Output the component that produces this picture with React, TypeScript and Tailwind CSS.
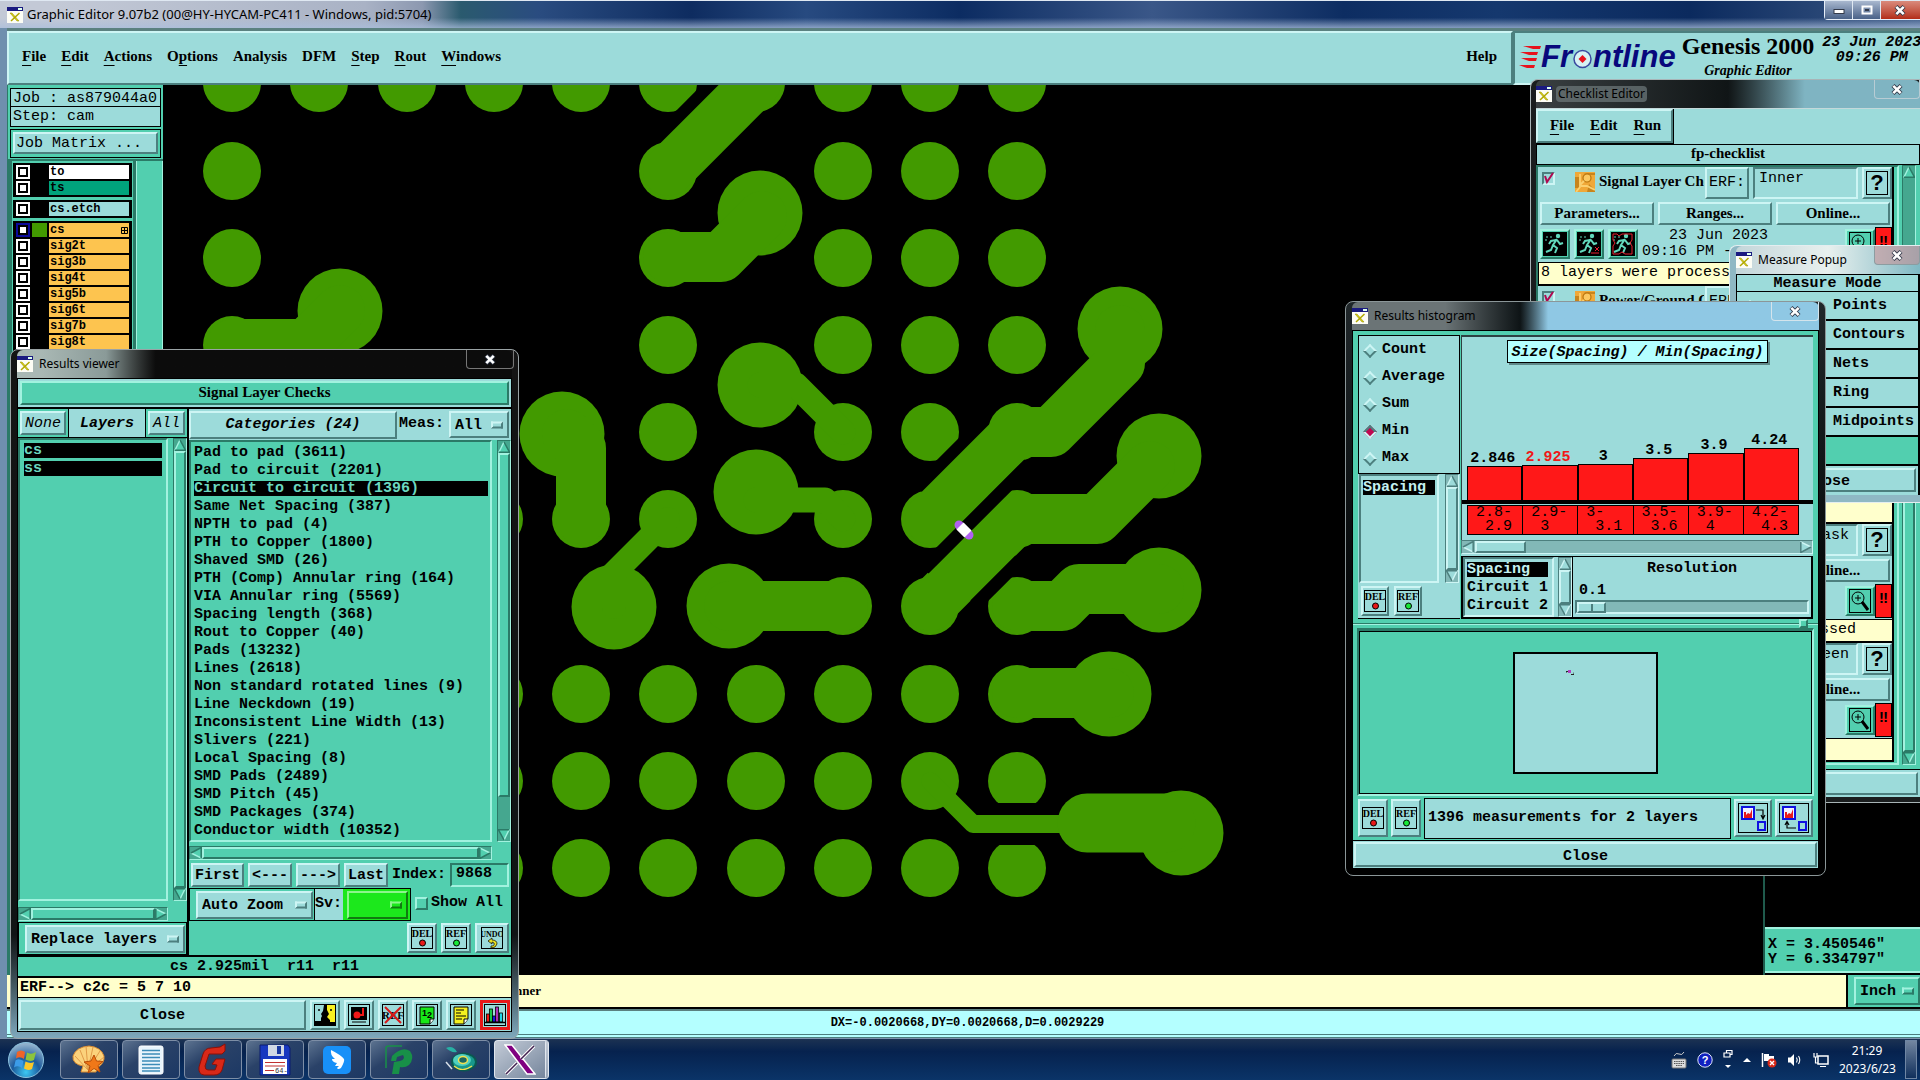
import { useState } from "react";
import type { ReactNode } from "react";
import clsx from "clsx";

const MONO = "font-['Liberation_Mono',monospace]";
const SERIF = "font-['Liberation_Serif',serif]";
const UI = "font-['Noto_Sans',sans-serif]";

const RAISED =
  "border-2 border-t-[#cdf5f4] border-l-[#cdf5f4] border-b-[#4c7f7e] border-r-[#4c7f7e] bg-[#9cdbda]";
const RAISED_TEAL =
  "border-2 border-t-[#a2f2df] border-l-[#a2f2df] border-b-[#2b7a67] border-r-[#2b7a67] bg-[#52cfaf]";
const SUNKEN =
  "border-2 border-t-[#4c7f7e] border-l-[#4c7f7e] border-b-[#cdf5f4] border-r-[#cdf5f4]";
const SUNKEN_TEAL =
  "border-2 border-t-[#2b7a67] border-l-[#2b7a67] border-b-[#a2f2df] border-r-[#a2f2df]";

const CATEGORIES = [
  "Pad to pad (3611)",
  "Pad to circuit (2201)",
  "Circuit to circuit (1396)",
  "Same Net Spacing (387)",
  "NPTH to pad (4)",
  "PTH to Copper (1800)",
  "Shaved SMD (26)",
  "PTH (Comp) Annular ring (164)",
  "VIA Annular ring (5569)",
  "Spacing length (368)",
  "Rout to Copper (40)",
  "Pads (13232)",
  "Lines (2618)",
  "Non standard rotated lines (9)",
  "Line Neckdown (19)",
  "Inconsistent Line Width (13)",
  "Slivers (221)",
  "Local Spacing (8)",
  "SMD Pads (2489)",
  "SMD Pitch (45)",
  "SMD Packages (374)",
  "Conductor width (10352)",
];

const LAYER_GROUPS = [
  [
    { name: "to", color: "bg-white" },
    { name: "ts", color: "bg-[#00a37c]" },
  ],
  [{ name: "cs.etch", color: "bg-[#9cdbda]" }],
  [
    { name: "cs", color: "bg-[#fdc44f]", active: true },
    { name: "sig2t", color: "bg-[#fdc44f]" },
    { name: "sig3b", color: "bg-[#fdc44f]" },
    { name: "sig4t", color: "bg-[#fdc44f]" },
    { name: "sig5b", color: "bg-[#fdc44f]" },
    { name: "sig6t", color: "bg-[#fdc44f]" },
    { name: "sig7b", color: "bg-[#fdc44f]" },
    { name: "sig8t", color: "bg-[#fdc44f]" },
  ],
];

const BARS = [
  { value: "2.846", height: 34, from: "2.8-", to: "2.9" },
  { value: "2.925", height: 35, from: "2.9-", to: "3", hot: true },
  { value: "3", height: 36, from: "3-", to: "3.1" },
  { value: "3.5", height: 42, from: "3.5-", to: "3.6" },
  { value: "3.9", height: 47, from: "3.9-", to: "4" },
  { value: "4.24", height: 52, from: "4.2-", to: "4.3" },
];

/* ---------- shared widgets ---------- */

function WindowIcon() {
  return (
    <svg width="16" height="16" viewBox="0 0 16 16" className="shrink-0">
      <rect width="16" height="16" fill="#fdfdf5" />
      <rect width="16" height="4" fill="#1a1a80" />
      <rect x="11" y="1" width="4" height="2" fill="#dfe" />
      <path d="M3 6 L5 6 L12 14 L10 14 Z" fill="#d8cf10" stroke="#8d8600" strokeWidth=".5" />
      <path d="M12.500 6 L4 14" stroke="#b0a800" strokeWidth="1.500" />
    </svg>
  );
}

function CloseGlyph() {
  return (
    <svg width="12" height="11" viewBox="0 0 12 11">
      <path d="M2 1.500 L10 9.500 M10 1.500 L2 9.500" stroke="#333a4a" strokeWidth="4.200" />
      <path d="M2.300 1.800 L9.700 9.200 M9.700 1.800 L2.300 9.200" stroke="#fff" strokeWidth="2.600" />
    </svg>
  );
}

interface FrameProps {
  title: string;
  className: string;
  barClass: string;
  titleClass?: string;
  closeClass: string;
  children: ReactNode;
}

function Frame({ title, className, barClass, titleClass, closeClass, children }: FrameProps) {
  return (
    <section className={clsx("absolute flex flex-col border", className)}>
      <header className={clsx("relative flex h-7 shrink-0 items-center gap-1 rounded-t-md pb-px", UI, barClass)}>
        <WindowIcon />
        <h2 className={clsx("px-0.5 text-[12px] leading-4", titleClass)}>{title}</h2>
        <button
          aria-label={`Close ${title}`}
          className={clsx("absolute top-0 flex h-[19px] items-center justify-center rounded-b border border-t-0", closeClass)}
        >
          <CloseGlyph />
        </button>
      </header>
      {children}
    </section>
  );
}

function Arrow({ dir, teal }: { dir: "up" | "down" | "left" | "right"; teal?: boolean }) {
  const rotate = { up: 0, right: 90, down: 180, left: 270 }[dir];
  return (
    <svg width="12" height="12" viewBox="0 0 12 12" className="shrink-0">
      <g transform={`rotate(${rotate} 6 6)`}>
        <path d="M6 1 L11.500 11.500 H.5 Z" fill={teal ? "#52cfaf" : "#9cdbda"} />
        <path d="M.8 11.500 L6 1" stroke={teal ? "#a2f2df" : "#cdf5f4"} strokeWidth="1.500" />
        <path d="M6 1 L11.500 11.200 H1" fill="none" stroke={teal ? "#2b7a67" : "#4c7f7e"} strokeWidth="1.500" />
      </g>
    </svg>
  );
}

interface ScrollProps {
  vertical?: boolean;
  teal?: boolean;
  before?: number;
  thumb?: number;
  after?: number;
  className?: string;
}

function ScrollBar({ vertical, teal, before = 0, thumb = 1, after = 0, className }: ScrollProps) {
  return (
    <div
      className={clsx(
        "flex shrink-0 items-stretch border",
        vertical ? "w-[14px] flex-col" : "h-[14px]",
        teal ? "border-t-[#2b7a67] border-l-[#2b7a67] border-b-[#a2f2df] border-r-[#a2f2df] bg-[#45a78f]" : "border-t-[#4c7f7e] border-l-[#4c7f7e] border-b-[#cdf5f4] border-r-[#cdf5f4] bg-[#82b8b7]",
        className
      )}
    >
      <Arrow dir={vertical ? "up" : "left"} teal={teal} />
      <div className={clsx("flex flex-1", vertical && "flex-col")}>
        <div style={{ flexGrow: before }} />
        <div className={teal ? RAISED_TEAL : RAISED} style={{ flexGrow: thumb }} />
        <div style={{ flexGrow: after }} />
      </div>
      <Arrow dir={vertical ? "down" : "right"} teal={teal} />
    </div>
  );
}

function OptionMenu({ label, text, className, barClass = RAISED }: { label: string; text: string; className?: string; barClass?: string }) {
  return (
    <div className={clsx("relative", className)}>
      <select
        aria-label={label}
        className={clsx("block h-full w-full appearance-none pt-0.5 pl-1 text-[15px] outline-none", barClass)}
      >
        <option>{text}</option>
      </select>
      <span className={clsx("pointer-events-none absolute top-1/2 right-[6px] h-[7px] w-3 -translate-y-1/2", barClass)} />
    </div>
  );
}

function IconButton({ label, className, children }: { label: string; className?: string; children: ReactNode }) {
  return (
    <button aria-label={label} className={clsx("flex shrink-0 items-center justify-center", RAISED, className)}>
      {children}
    </button>
  );
}

function TagIcon({ text, dot }: { text: string; dot?: string }) {
  return (
    <svg width="22" height="22" viewBox="0 0 22 22">
      <rect x=".5" y=".5" width="21" height="21" fill="none" stroke="#000" />
      <text x="11" y="10" textAnchor="middle" fontFamily="Liberation Serif, serif" fontSize={text.length > 3 ? 8 : 10}>
        {text}
      </text>
      {dot ? (
        <circle cx="11.500" cy="16" r="3" fill={dot} stroke="#000" />
      ) : (
        <path d="M7 14 L11 11 V13 Q16 13 16 17 Q15 21 10 21 V19 Q14 19 13 16 L11 15 V17 Z" fill="#e8e020" stroke="#000" strokeWidth=".7" />
      )}
    </svg>
  );
}

function Menu({ items, className }: { items: [string, number][]; className?: string }) {
  return (
    <nav className={clsx("flex items-center text-[15px] font-bold", SERIF, className)}>
      {items.map(([name, key]) => (
        <button key={name}>
          {key < 0 ? (
            name
          ) : (
            <>
              {name.slice(0, key)}
              <span className="underline underline-offset-4">{name[key]}</span>
              {name.slice(key + 1)}
            </>
          )}
        </button>
      ))}
    </nav>
  );
}

/* ---------- main editor window ---------- */

function Logo() {
  return (
    <div className="flex items-center">
      <svg width="22" height="26" viewBox="0 0 22 26">
        <g fill="#e8121c">
          <path d="M4 2 H22 L21 5 H14 Z" />
          <path d="M1 8 H19 L18 11 H10 Z" />
          <path d="M2 14 H18 L17 17 H10 Z" />
          <path d="M0 21 H16 L15 24 H8 Z" />
        </g>
      </svg>
      <div className="flex items-center font-['Liberation_Sans',sans-serif] text-[31px] leading-none font-bold text-[#08087c] italic">
        Fr
        <svg width="21" height="22" viewBox="0 0 21 22" className="mt-1">
          <circle cx="10.500" cy="11" r="8.500" fill="#d6f2f4" stroke="#3a4aa0" strokeWidth="1.500" />
          <path d="M10.500 7 L14.500 11 L10.500 15 L6.500 11 Z" fill="#e8121c" />
        </svg>
        ntline
      </div>
    </div>
  );
}

function MainTitle() {
  return (
    <header
      className={clsx(
        "flex h-7 shrink-0 items-center border-t border-[#dfe8f2] pl-[7px]",
        "bg-[linear-gradient(to_bottom,transparent_62%,rgba(170,190,220,0.75)),linear-gradient(to_right,#c3c9d6_3%,#a9b2c5_19%,#8c98b0_22%,#2a5a6e_24%,#2a4c80_28%,#0e2c60_36%,#274a80_42%,#0c2c62_50%,#3a5788_60%,#0d2d62_70%,#15386e_78%,#0b2a5e_88%,#3d5a86)]",
        UI
      )}
    >
      <WindowIcon />
      <h1 className="pb-0.5 pl-1 text-[13px] leading-4 text-black">Graphic Editor 9.07b2 (00@HY-HYCAM-PC411 - Windows, pid:5704)</h1>
      <div className="ml-auto flex h-[19px] self-start rounded-bl border-b border-l border-[#e6eef8]">
        <button aria-label="Minimize" className="flex w-7 items-center justify-center border-r border-[#dfe8f2] bg-linear-to-b from-[#a9b8cf] to-[#4a6288]">
          <svg width="12" height="10"><rect x="1" y="4.500" width="10" height="4" fill="#fff" stroke="#333a4a" /></svg>
        </button>
        <button aria-label="Restore" className="flex w-7 items-center justify-center border-r border-[#dfe8f2] bg-linear-to-b from-[#a9b8cf] to-[#4a6288]">
          <svg width="12" height="10"><rect x="1.500" y="1.500" width="9" height="7" fill="none" stroke="#fff" strokeWidth="2" /><rect x="4" y="4" width="4" height="2" fill="#333a4a" /></svg>
        </button>
        <button aria-label="Close" className="flex w-[39px] items-center justify-center bg-linear-to-b from-[#d98a7c] to-[#b32b16] pr-px">
          <CloseGlyph />
        </button>
      </div>
    </header>
  );
}

function HeaderBar() {
  return (
    <div className="flex h-[57px] shrink-0 border-t-[3px] border-[#5b8180] bg-[#9cdbda]">
      <div className={clsx("flex flex-1 items-center pr-[14px] pb-1 pl-[13px]", RAISED)}>
        <Menu
          className="gap-[15px]"
          items={[
            ["File", 0],
            ["Edit", 0],
            ["Actions", 0],
            ["Options", 1],
            ["Analysis", -1],
            ["DFM", -1],
            ["Step", 0],
            ["Rout", 0],
            ["Windows", 0],
          ]}
        />
        <Menu className="ml-auto" items={[["Help", -1]]} />
      </div>
      <div className={clsx("flex w-[407px] items-start gap-1.5 border-r-0 pl-1", SUNKEN)}>
        <div className="pt-2">
          <Logo />
        </div>
        <div className={clsx("shrink-0 text-center font-bold", SERIF)}>
          <p className="text-[24px] leading-[26px]">Genesis 2000</p>
          <p className="text-[14px] leading-6 italic">Graphic Editor</p>
        </div>
        <p className={clsx("ml-0.5 shrink-0 pt-0.5 text-center text-[15px] leading-[15px] font-bold whitespace-pre italic", MONO)}>
          23 Jun 2023
          <br />
          09:26 PM
        </p>
      </div>
    </div>
  );
}

function LayerRow({ name, color, active }: { name: string; color: string; active?: boolean }) {
  return (
    <button className="flex h-4 w-full items-center gap-0.5 bg-black pr-0.5 pl-[2px] text-left">
      <span className={clsx("flex h-3.5 w-3.5 items-center justify-center", active ? "bg-[#0a0a9c]" : "bg-white")}>
        <span className="h-2.5 w-2.5 border-2 border-black bg-white" />
      </span>
      <span className={clsx("h-3.5 w-[15px]", active ? "bg-[#429a00]" : "bg-black")} />
      <span className={clsx("flex h-3.5 flex-1 items-center pl-px text-[12px] leading-none font-bold", color)}>
        {name}
        {active && (
          <svg width="7" height="7" viewBox="0 0 7 7" className="mr-px ml-auto">
            <path d="M.5 .5 H6.500 V6.500 H.5 Z M3.500 0 V7 M0 3.500 H7" fill="none" stroke="#000" />
          </svg>
        )}
      </span>
    </button>
  );
}

function Sidebar() {
  return (
    <aside className="flex w-[156px] shrink-0 flex-col border-l border-[#2b7a67] bg-[#52cfaf] text-[15px]">
      <div className="flex flex-col gap-0.5 px-0.5 pt-[3px]">
        <p className="h-[19px] border border-black bg-[#9cdbda] pl-0.5 leading-[19px]">Job : as879044a0</p>
        <p className="-mt-0.5 h-5 border border-t-0 border-black bg-[#9cdbda] pl-0.5 leading-5">Step: cam</p>
        <div className="border border-black p-0.5">
          <button className={clsx("h-[22px] w-full pl-px text-left leading-none", RAISED)}>Job Matrix ...</button>
        </div>
      </div>
      <div className="mt-px flex min-h-0 flex-1 border-t-2 border-[#2b7a67]">
        <div className="flex w-32 flex-col gap-[3px] border-r-[3px] border-l-4 border-r-[#2b7a67] border-l-[#2b7a67] px-px pt-0.5">
          {LAYER_GROUPS.map((group, i) => (
            <div key={i} className="border border-black bg-black">
              {group.map((layer) => (
                <LayerRow key={layer.name} {...layer} />
              ))}
            </div>
          ))}
        </div>
        <div className="flex-1 border-r border-l border-[#a2f2df]" />
      </div>
    </aside>
  );
}

// solder pads, listed per row: [y, ...x]
const PAD_ROWS = [
  [83, 232, 319, 407, 494, 581, 668, 756, 843, 930, 1017],
  [171, 232, 668, 843, 930, 1017],
  [258, 232, 668, 843, 930, 1017],
  [345, 232, 668, 843, 930, 1017],
  [432, 668, 843, 930, 1017],
  [519, 494, 581, 668, 843, 930, 1017],
  [606, 843, 930, 1017],
  [694, 494, 581, 668, 756, 843, 930, 1017],
  [781, 494, 581, 668, 756, 843, 930, 1017],
  [868, 494, 581, 668, 756, 843, 930, 1017],
];

const VIAS = [
  [340, 311],
  [760, 213],
  [760, 385],
  [756, 492],
  [562, 434],
  [614, 607],
  [729, 606],
  [1120, 329],
  [1159, 456],
  [1159, 590],
  [1109, 694],
  [1181, 833],
];

function Board() {
  return (
    <svg className="h-full w-full">
      <g transform="translate(-163 -85)" fill="#429a00">
        {PAD_ROWS.map(([y, ...xs]) => xs.map((x) => <circle key={`${x}-${y}`} cx={x} cy={y} r="29" />))}
        {/* clearances cut into neighbouring pads */}
        <g stroke="#000" strokeWidth="13">
          <path d="M716 80 L672 124" />
          <path d="M975 431 L918 488" />
        </g>
        <rect x="985" y="803" width="65" height="42" fill="#000" />
        {VIAS.map(([x, y]) => (
          <circle key={`${x}-${y}`} cx={x} cy={y} r="42.500" />
        ))}
        <g fill="none" stroke="#429a00" strokeWidth="50" strokeLinecap="round" strokeLinejoin="round">
          <path d="M232 344 H306 L340 310" />
          <path d="M668 171 L756 83" />
          <path d="M668 257 H721 L762 216" />
          <path d="M567 434 L581 448 V519" />
          <path d="M729 606 H843" />
          <path d="M930 519 L1017 432 H1051 L1120 363 V330" />
          <path d="M930 606 L1017 519 H1097 L1150 466" />
          <path d="M1017 606 H1062 L1079 589 H1159" />
          <path d="M1017 693 H1109" />
          <path d="M843 432 L796 385 H760" strokeWidth="25" />
          <path d="M843 519 L825 500 H756" strokeWidth="25" />
          <path d="M668 519 L614 573 V607" strokeWidth="24" />
          <path d="M930 781 L973 824 H1080" strokeWidth="18" />
          <path d="M1087 823 H1166" strokeWidth="59" />
        </g>
        <g stroke="#000" strokeWidth="13">
          <path d="M1029 464 L924 569" />
          <path d="M1020 560 L975 605" />
        </g>
        <path d="M959 525 L969 535" stroke="#b060f0" strokeWidth="9" strokeLinecap="round" />
        <path d="M960 526 L968 534" stroke="#fff" strokeWidth="10" />
      </g>
    </svg>
  );
}

/* ---------- results viewer ---------- */

const ICONS = {
  faces: (
    <svg width="22" height="22" viewBox="0 0 22 22">
      <rect x=".5" y=".5" width="21" height="21" fill="#9cdbda" stroke="#000" />
      <path d="M13 1 H21 V21 H11 Z" fill="#f8f020" />
      <path d="M10 1 H13 V6 L15 10 L13 13 L16 16 V18 H21 V21 H1 V17 H7 V14 L8 12 L7 10 L9 7 Z" fill="#000" />
      <path d="M5 5 V7 M17 5 V7" stroke="#000" strokeWidth="1.500" />
    </svg>
  ),
  stamp: (
    <svg width="22" height="22" viewBox="0 0 22 22">
      <rect x=".5" y=".5" width="21" height="21" fill="#9cdbda" stroke="#000" />
      <rect x="3" y="3" width="16" height="13" fill="#000" />
      <circle cx="9" cy="11" r="3.500" fill="#f01818" />
      <path d="M9 10 H14 V4 H16 V12 H10 Z" fill="#f01818" />
      <path d="M4 18 H18" stroke="#000" />
    </svg>
  ),
  noRef: (
    <svg width="24" height="22" viewBox="0 0 24 22">
      <rect x="1.500" y=".5" width="21" height="21" fill="none" stroke="#000" />
      <text x="12" y="15" textAnchor="middle" fontFamily="Liberation Serif, serif" fontSize="11">REF</text>
      <path d="M4 3 L20 19 M20 3 L4 19" stroke="#d81818" strokeWidth="2" />
    </svg>
  ),
  page12: (
    <svg width="22" height="22" viewBox="0 0 22 22">
      <rect x=".5" y=".5" width="21" height="21" fill="none" stroke="#000" />
      <path d="M4 3 H18 V15 L14 20 H4 Z" fill="#18e818" stroke="#000" />
      <path d="M18 15 H14 V20" fill="#fff" stroke="#000" />
      <text x="6" y="12" fontFamily="Liberation Sans, sans-serif" fontWeight="bold" fontSize="9">1</text>
      <text x="11" y="14" fontFamily="Liberation Sans, sans-serif" fontWeight="bold" fontSize="9">2</text>
    </svg>
  ),
  note: (
    <svg width="22" height="22" viewBox="0 0 22 22">
      <rect x=".5" y=".5" width="21" height="21" fill="none" stroke="#000" />
      <path d="M4 3 H18 V15 L14 20 H4 Z" fill="#f4f020" stroke="#000" />
      <path d="M18 15 H14 V20" fill="#fff" stroke="#000" />
      <path d="M6 6 H14 M6 9 H11 M6 12 H16 M6 15 H12" stroke="#000" />
    </svg>
  ),
  bars: (
    <svg width="22" height="22" viewBox="0 0 22 22">
      <rect x=".5" y=".5" width="21" height="21" fill="#9cdbda" stroke="#000" />
      <g stroke="#000" strokeWidth=".8">
        <rect x="2.500" y="10" width="3" height="8" fill="#f01818" />
        <rect x="5.500" y="5" width="3" height="13" fill="#18c848" />
        <rect x="8.500" y="12" width="3" height="6" fill="#1818e0" />
        <rect x="11.500" y="3" width="3" height="15" fill="#b030b8" />
        <rect x="15.500" y="9" width="3" height="9" fill="#20d8e8" />
        <path d="M1 18.500 H21" strokeWidth="1.500" />
      </g>
    </svg>
  ),
};

function ResultsViewer() {
  const [selected, setSelected] = useState(2);

  return (
    <Frame
      title="Results viewer"
      className="top-[349px] left-[10px] h-[690px] w-[509px] rounded-lg border-[#9aa3a5] bg-linear-to-b from-[#141414] via-[#101415] via-85% to-[#7fa9bd] px-1.5 pb-1.5"
      barClass="bg-linear-to-r from-[#a9b8b4] from-5% via-[#8a9a98] via-18% to-[#0c0c0c] to-28%"
      titleClass="text-black"
      closeClass="right-[-2px] w-12 border-[#777]"
    >
      <div className={clsx("flex min-h-0 flex-1 flex-col bg-black p-px text-[15px] font-bold", MONO)}>
        <div className="h-7 shrink-0 border border-[#9cdbda] bg-[#9cdbda] p-px">
          <h3 className={clsx("h-full text-center text-[15px] leading-[19px]", SERIF, RAISED_TEAL)}>Signal Layer Checks</h3>
        </div>

        <div className="mt-0.5 flex min-h-0 flex-1 gap-0.5">
          <div className="flex w-[169px] flex-col">
            <div className="flex h-7 shrink-0 gap-px text-center italic">
              <div className="w-[50px] bg-[#52cfaf] p-0.5">
                <button className={clsx("h-full w-full leading-none font-normal italic", RAISED)}>None</button>
              </div>
              <span className="flex-1 bg-[#9cdbda] leading-[29px]">Layers</span>
              <div className="w-[41px] bg-[#52cfaf] p-0.5">
                <button className={clsx("h-full w-full leading-none font-normal italic", RAISED)}>All</button>
              </div>
            </div>
            <div className="mt-px flex min-h-0 flex-1 flex-col gap-1.5 bg-[#52cfaf] pb-px">
              <div className="flex min-h-0 flex-1 justify-between">
                <ul className={clsx("w-[150px] px-1 pt-[3px]", SUNKEN_TEAL)}>
                  {["cs", "ss"].map((layer) => (
                    <li key={layer} className="mb-[3px] h-[15px] bg-black leading-[15px] text-[#6cd8c0]">
                      {layer}
                    </li>
                  ))}
                </ul>
                <ScrollBar vertical teal />
              </div>
              <ScrollBar teal className="w-[150px]" />
            </div>
            <div className="flex h-[33px] shrink-0 items-center border border-black bg-[#52cfaf] pr-px pl-1.5">
              <OptionMenu label="Replace layers mode" text="Replace layers" className="h-7 flex-1" />
            </div>
          </div>

          <div className="flex min-w-0 flex-1 flex-col bg-[#52cfaf]">
            <div className="flex h-[31px] shrink-0 items-center gap-0.5 bg-[#9cdbda]">
              <button className={clsx("h-[28px] w-[208px] leading-none italic", RAISED)}>Categories (24)</button>
              <span>Meas:</span>
              <OptionMenu label="Measurements" text="All" className="mr-0.5 ml-auto h-[27px] w-[60px]" />
            </div>
            <div className="flex min-h-0 flex-1 justify-between pb-1">
              <ul className={clsx("w-[303px] overflow-hidden pt-[3px] pr-0.5 pl-[3px]", SUNKEN_TEAL)}>
                {CATEGORIES.map((category, i) => (
                  <li key={category} className="mb-[3px] h-[15px]">
                    <button
                      onClick={() => setSelected(i)}
                      className={clsx(
                        "block h-[15px] w-full text-left leading-[15px]",
                        i === selected && "bg-black text-[#6cd8c0]"
                      )}
                    >
                      {category}
                    </button>
                  </li>
                ))}
              </ul>
              <ScrollBar vertical teal thumb={345} after={32} />
            </div>
            <ScrollBar teal className="w-[303px]" />
            <div className="mt-[3px] flex h-6 shrink-0 items-center gap-1 px-0.5">
              <button className={clsx("h-full w-[53px] shrink-0 leading-none", RAISED)}>First</button>
              <button className={clsx("h-full w-11 shrink-0 leading-none", RAISED)}>&lt;---</button>
              <button className={clsx("h-full w-11 shrink-0 leading-none", RAISED)}>---&gt;</button>
              <button className={clsx("h-full w-11 shrink-0 leading-none", RAISED)}>Last</button>
              <label htmlFor="index">Index:</label>
              <input id="index" defaultValue="9868" className={clsx("h-full min-w-0 flex-1 pb-1 pl-1 outline-none", SUNKEN_TEAL)} />
            </div>
            <div className="mt-px flex h-[33px] shrink-0 items-center">
              <div className="flex h-full w-[126px] items-center border border-black px-px pl-[6px]">
                <OptionMenu label="Zoom mode" text="Auto Zoom" className="h-7 flex-1" />
              </div>
              <div className="flex h-full w-24 items-center border border-l-0 border-black bg-[#1ce81c] pr-0.5">
                <span className="flex h-full w-7 items-center bg-[#9cdbda]">Sv:</span>
                <OptionMenu
                  label="Severity"
                  text=""
                  className="ml-1 h-7 flex-1"
                  barClass="border-2 border-t-[#8df58d] border-l-[#8df58d] border-b-[#117a11] border-r-[#117a11] bg-[#1ce81c]"
                />
              </div>
              <label className="ml-1 flex items-center gap-[3px] pb-0.5">
                <input type="checkbox" className={clsx("h-[13px] w-[13px] appearance-none", RAISED_TEAL)} />
                Show All
              </label>
            </div>
            <div className="flex h-[34px] shrink-0 items-center justify-end gap-1 pr-0.5">
              <IconButton label="Delete" className="h-[30px] w-[30px]">
                <TagIcon text="DEL" dot="#e81818" />
              </IconButton>
              <IconButton label="Reference" className="h-[30px] w-[30px]">
                <TagIcon text="REF" dot="#18e838" />
              </IconButton>
              <IconButton label="Undo" className="h-[30px] w-[34px]">
                <TagIcon text="UNDO" />
              </IconButton>
            </div>
          </div>
        </div>

        <p className="mt-0.5 h-[19px] shrink-0 bg-[#52cfaf] text-center leading-[20px] whitespace-pre">cs 2.925mil  r11  r11</p>
        <p className="mt-0.5 h-[19px] shrink-0 bg-[#ffffcc] pl-0.5 leading-[20px]">ERF--&gt; c2c = 5 7 10</p>
        <div className="mt-px flex h-[33px] shrink-0 items-center gap-1 bg-[#9cdbda] px-px">
          <button className={clsx("h-[30px] flex-1 pt-0.5 leading-none", RAISED)}>Close</button>
          <IconButton label="Compare" className="h-[30px] w-[30px]">{ICONS.faces}</IconButton>
          <IconButton label="Snapshot" className="h-[30px] w-[30px]">{ICONS.stamp}</IconButton>
          <IconButton label="Clear reference" className="h-[30px] w-[30px]">{ICONS.noRef}</IconButton>
          <IconButton label="Numbers" className="h-[30px] w-[30px]">{ICONS.page12}</IconButton>
          <IconButton label="Notes" className="h-[30px] w-[30px]">{ICONS.note}</IconButton>
          <button aria-label="Histogram" className="flex h-[30px] w-[30px] items-center justify-center border-[3px] border-[#e81818]">
            {ICONS.bars}
          </button>
        </div>
      </div>
    </Frame>
  );
}

/* ---------- checklist editor ---------- */

function Runner({ variant }: { variant: number }) {
  return (
    <svg width="24" height="24" viewBox="0 0 24 24">
      <rect width="24" height="24" fill="#000" />
      <circle cx="15" cy="4" r="2.200" fill="#62d8bc" />
      <path d="M14 7 L10 13 L14 16 L12 21 M10 13 L8 18 L3 20 M13 8 L8 9 L6 12 M14 8 L17 12 L20 11" fill="none" stroke="#62d8bc" strokeWidth="2" />
      <path d="M3 5 H5 M7 5 H9 M2 8 H4" stroke="#62d8bc" />
      {variant === 1 && <path d="M18 15 L22 19 M22 15 L18 19 M14 21 H22" stroke="#e82030" />}
      {variant === 2 && <path d="M2 2 H6 L8 4 L11 2 H21 V8 L19 11 L21 14 V22 H14 L11 20 L8 22 H2 V14 L4 11 L2 8 Z" fill="none" stroke="#e82030" />}
    </svg>
  );
}

function ChecklistCard({ id, name, erf, date, time, message }: { id: string; name: string; erf: string; date?: string; time?: string; message?: string }) {
  return (
    <article className="flex h-[119px] shrink-0 flex-col border-r-2 border-b-2 border-black bg-[#9cdbda]">
      <div className="flex h-[33px] shrink-0 items-start">
        <span className="relative mt-[5px] ml-1 h-[13px] w-[13px] shrink-0">
          <input id={id} type="checkbox" defaultChecked className={clsx("block h-[13px] w-[13px] appearance-none", SUNKEN)} />
          <svg viewBox="0 0 13 13" className="pointer-events-none absolute inset-0">
            <path d="M3 4 L5 10 L11 1" fill="none" stroke="#b00850" strokeWidth="2" />
          </svg>
        </span>
        <svg width="20" height="20" viewBox="0 0 20 20" className="mt-[5px] ml-5 shrink-0">
          <rect width="20" height="20" fill="#f0a838" />
          <path d="M0 5 H4 V16 H0 Z M14 12 L20 18 V20 H12 Z M8 1 H20 V3 H16 Z" fill="#c8841c" />
          <circle cx="12" cy="6" r="4" fill="#fbc860" stroke="#b8740c" strokeWidth="1.200" />
          <path d="M5 2 V15 L1 20 M6 14 H12 L20 18 M9 9 L5 13" stroke="#fbd070" strokeWidth="1.800" fill="none" />
        </svg>
        <label htmlFor={id} className={clsx("mt-1 ml-1 w-[105px] shrink-0 overflow-hidden text-[15px] leading-5 font-bold whitespace-nowrap", SERIF)}>
          {name}
        </label>
        <span className={clsx("ml-px flex h-8 w-11 shrink-0 items-center justify-center", RAISED)}>ERF:</span>
        <input aria-label={`${name} ERF`} defaultValue={erf} className={clsx("ml-1 h-8 min-w-0 flex-1 pb-2.5 pl-1 outline-none", SUNKEN)} />
        <button className={clsx("ml-1 h-8 w-[30px] p-0.5", RAISED)} aria-label={`Help on ${name}`}>
          <span className="flex h-full items-center justify-center border border-black font-['Liberation_Sans',sans-serif] text-[22px] leading-none font-bold">?</span>
        </button>
      </div>
      <div className={clsx("mt-0.5 flex h-[23px] shrink-0 gap-1 px-0.5 text-[15px] font-bold", SERIF)}>
        {["Parameters...", "Ranges...", "Online..."].map((text) => (
          <button key={text} className={clsx("flex-1 leading-none", RAISED)}>
            {text}
          </button>
        ))}
      </div>
      <div className="flex h-[37px] shrink-0 items-center gap-1 pl-0.5">
        {[0, 1, 2].map((v) => (
          <button key={v} aria-label={`Run ${v + 1}`} className={clsx("flex h-[30px] w-[30px] shrink-0 items-center justify-center", RAISED_TEAL)}>
            <Runner variant={v} />
          </button>
        ))}
        <p className="flex-1 leading-4 whitespace-pre">
          {"   "}
          {date}
          <br />
          {time}
        </p>
        <button aria-label="Zoom" className={clsx("flex h-[30px] w-[30px] shrink-0 items-center justify-center", RAISED_TEAL)}>
          <svg width="22" height="24" viewBox="0 0 22 24">
            <rect x=".5" y=".5" width="21" height="23" fill="none" stroke="#000" />
            <circle cx="9" cy="9" r="6" fill="none" stroke="#000" />
            <path d="M6 9 H12 M9 6 V12" stroke="#000" />
            <path d="M13 13 L19 21" stroke="#000" strokeWidth="3" />
          </svg>
        </button>
        <span className="-ml-1 flex h-[34px] w-[17px] shrink-0 items-center justify-center border border-black bg-[#ff1818] font-bold">‼</span>
      </div>
      <p className="min-h-0 flex-1 border-t border-l border-black bg-[#ffffcc] pl-0.5 leading-[19px]">{message}</p>
    </article>
  );
}

function ChecklistEditor() {
  return (
    <Frame
      title="Checklist Editor"
      className="top-[79px] right-0 h-[724px] w-[390px] rounded-tl-lg rounded-bl-lg border-r-0 border-[#a8b4b6] bg-[#1a1d1e] pb-[5px] pl-[5px]"
      barClass="bg-linear-to-r from-[#3a4042] via-[#101516] via-50% to-[#7fb4c2] to-70%"
      titleClass="rounded bg-[#6f7a7c]/70 text-black"
      closeClass="right-0 w-[46px] border-[#b8ccd4]"
    >
      <div className={clsx("flex min-h-0 flex-1 flex-col border-t border-[#c4d8da] bg-[#9cdbda] text-[15px]", MONO)}>
        <div className="flex h-[35px] shrink-0">
          <div className={clsx("flex w-[138px] items-center justify-center border-r border-b border-black")}>
            <Menu
              className={clsx("h-full w-full justify-center gap-[16px] pb-0.5 pl-0.5", RAISED)}
              items={[
                ["File", 0],
                ["Edit", 0],
                ["Run", 0],
              ]}
            />
          </div>
        </div>
        <h3 className={clsx("h-[21px] shrink-0 border border-black text-center text-[15px] leading-[17px] font-bold", SERIF)}>fp-checklist</h3>
        <div className="flex min-h-0 flex-1 gap-[3px] bg-[#52cfaf] pr-1 pb-1">
          <div className={clsx("flex min-w-0 flex-1 flex-col overflow-hidden pr-[3px]", SUNKEN_TEAL)}>
            <ChecklistCard id="c1" name="Signal Layer Checks" erf="Inner" date="23 Jun 2023" time="09:16 PM - 1" message="8 layers were processed" />
            <ChecklistCard id="c2" name="Power/Ground Checks" erf="Inner" />
            <ChecklistCard id="c3" name="Drill Checks" erf="Drill" />
            <ChecklistCard id="c4" name="Solder Mask Checks" erf="Outer mask" message="The outer layers were all processed" />
            <ChecklistCard id="c5" name="Silk Screen Checks" erf="Silkscreen" />
          </div>
          <ScrollBar vertical teal before={125} thumb={445} />
        </div>
        <div className="h-7 shrink-0 border-t border-black p-0.5">
          <button className={clsx("h-full w-full leading-none font-bold", RAISED)}>Close</button>
        </div>
      </div>
    </Frame>
  );
}

/* ---------- measure popup ---------- */

function MeasurePopup() {
  return (
    <Frame
      title="Measure Popup"
      className="top-[245px] right-0 h-[258px] w-[191px] rounded-tl-lg rounded-bl-lg border-r-0 border-[#e4eef0] bg-[#8fb8c4] pb-[7px] pl-1.5"
      barClass="bg-linear-to-r from-[#c4d6da] via-[#e8f0ee] via-50% to-[#7fb9c4]"
      titleClass="text-black"
      closeClass="right-0 w-[46px] border-[#8c9ca0] bg-[#d0888c]/50"
    >
      <div className={clsx("flex min-h-0 flex-1 flex-col border-t border-r-2 border-l border-black bg-[#52cfaf] text-[15px] font-bold", MONO)}>
        <h3 className="h-[17px] shrink-0 border-b border-black bg-[#9cdbda] text-center leading-[17px]">Measure Mode</h3>
        {["Points", "Contours", "Nets", "Ring", "Midpoints"].map((mode) => (
          <label key={mode} className="flex h-[29px] shrink-0 items-center border-b-2 border-black bg-[#9cdbda] pt-0.5">
            <input type="radio" name="measure" className={clsx("ml-2 h-2.5 w-2.5 rotate-45 appearance-none", RAISED)} />
            <span className="pl-[78px]">{mode}</span>
          </label>
        ))}
        <div className="mt-auto border-t-2 border-black bg-[#9cdbda] p-0.5">
          <button className={clsx("h-6 w-full pt-0.5 leading-none", RAISED)}>Close</button>
        </div>
      </div>
    </Frame>
  );
}

/* ---------- results histogram ---------- */

function MoveIcon({ up }: { up?: boolean }) {
  return (
    <svg width="30" height="30" viewBox="0 0 30 30">
      <rect x=".5" y=".5" width="29" height="29" fill="none" stroke="#000" />
      <rect x="4" y="4" width="12" height="12" fill="#f0f0ff" stroke="#1010e0" strokeWidth="2" />
      <path d="M6 15 V9 L8 9 V12 L10 10 L12 11 L14 6 V15 Z" fill="#e81818" />
      <rect x="20" y="19" width="7" height="8" fill="none" stroke="#1010e0" strokeWidth="2" />
      {up ? (
        <path d="M17 25 H8 V19 M6 22 L8 18.500 L10 22" fill="none" stroke="#000" strokeWidth="1.200" />
      ) : (
        <path d="M18 7 H25 V16 M23 12 L25 16 L27 12" fill="none" stroke="#000" strokeWidth="1.200" />
      )}
    </svg>
  );
}

function ResultsHistogram() {
  const [stat, setStat] = useState("Min");

  return (
    <Frame
      title="Results histogram"
      className="top-[301px] right-[94px] h-[575px] w-[481px] rounded-lg border-[#8b9698] bg-linear-to-b from-[#20272a] to-black px-1.5 pb-1.5"
      barClass="bg-linear-to-r from-[#6b7476] from-20% via-[#0e1416] via-36% to-[#8fc8e4] to-42%"
      titleClass="text-black"
      closeClass="right-0 w-12 border-[#d4e4ec]"
    >
      <div className={clsx("flex min-h-0 flex-1 flex-col border border-black bg-[#52cfaf] text-[15px] font-bold", MONO)}>
        <div className="flex h-[288px] shrink-0 gap-px px-[5px] pt-1">
          <div className="flex w-[102px] shrink-0 flex-col border-b border-black bg-[#9cdbda]">
            <fieldset className="flex h-[139px] flex-col justify-center border border-black pt-px">
              {["Count", "Average", "Sum", "Min", "Max"].map((name) => (
                <label key={name} className="flex h-[27px] items-center gap-[7px] pl-1.5">
                  <input
                    type="radio"
                    name="stat"
                    checked={stat === name}
                    onChange={() => setStat(name)}
                    className="h-2.5 w-2.5 rotate-45 appearance-none border-2 border-t-[#cdf5f4] border-r-[#4c7f7e] border-b-[#4c7f7e] border-l-[#cdf5f4] checked:border-t-[#4c7f7e] checked:border-r-[#cdf5f4] checked:border-b-[#cdf5f4] checked:border-l-[#4c7f7e] checked:bg-[#c00850]"
                  />
                  {name}
                </label>
              ))}
            </fieldset>
            <div className="flex min-h-0 flex-1 justify-between px-px">
              <div className={clsx("w-20 px-0.5 pt-1", SUNKEN)}>
                <p className="h-[15px] w-[72px] bg-black leading-[15px] text-[#c4f0f0]">Spacing</p>
              </div>
              <ScrollBar vertical />
            </div>
            <div className="flex h-[35px] shrink-0 items-center gap-[5px] pl-[3px]">
              <IconButton label="Delete" className="h-[30px] w-[28px]">
                <TagIcon text="DEL" dot="#e81818" />
              </IconButton>
              <IconButton label="Reference" className="h-[30px] w-[28px]">
                <TagIcon text="REF" dot="#18e838" />
              </IconButton>
            </div>
          </div>

          <div className="flex min-w-0 flex-1 flex-col bg-[#9cdbda]">
            <div className="flex min-h-0 flex-1 flex-col border-t-2 border-l border-black/70">
              <p className="mt-[3px] self-center border border-black bg-[#b4ffff] px-[3px] pt-[3px] leading-[18px] italic shadow-[2px_2px_0_#5f8a8a]">
                Size(Spacing) / Min(Spacing)
              </p>
              <div className="flex flex-1 items-end pr-[14px] pl-[5px]">
                {BARS.map((bar) => (
                  <div key={bar.value} className="min-w-0 flex-1 text-center">
                    <p className={clsx("pr-1 leading-[15px]", bar.hot && "text-[#f01818]")}>{bar.value}</p>
                    <div className="border-t border-r border-l border-black bg-[#ff1818]" style={{ height: bar.height }} />
                  </div>
                ))}
              </div>
              <div className="h-1 bg-black" />
              <div className="mt-px mb-[5px] flex h-[30px] pr-[14px] pl-[5px]">
                {BARS.map((bar) => (
                  <p
                    key={bar.from}
                    className="min-w-0 flex-1 border border-r-0 border-black bg-[#ff1818] pl-2 leading-[14px] font-normal whitespace-pre last:border-r"
                  >
                    {bar.from}
                    <br /> {bar.to}
                  </p>
                ))}
              </div>
            </div>
            <ScrollBar before={1} thumb={47} after={275} />
            <div className="mt-0.5 flex h-[63px] shrink-0 border-2 border-t border-black">
              <ul className={clsx("w-[91px] pt-[3px] pl-0.5", SUNKEN)}>
                {["Spacing", "Circuit 1", "Circuit 2"].map((item, i) => (
                  <li key={item} className={clsx("mb-[3px] h-[15px] w-[81px] leading-[15px]", i === 0 && "bg-black text-[#c4f0f0]")}>
                    {item}
                  </li>
                ))}
              </ul>
              <ScrollBar vertical className="ml-1" />
              <div className="flex flex-1 flex-col border-l border-black px-0.5">
                <label htmlFor="resolution" className="pt-px text-center leading-[22px]">
                  Resolution
                </label>
                <output htmlFor="resolution" className="pt-px pl-1 leading-[19px]">
                  0.1
                </output>
                <input
                  id="resolution"
                  type="range"
                  min="0"
                  max="10"
                  defaultValue="0"
                  className={clsx(
                    "h-[14px] w-full appearance-none bg-[#82b8b7]",
                    SUNKEN,
                    "[&::-webkit-slider-thumb]:h-[11px] [&::-webkit-slider-thumb]:w-[29px] [&::-webkit-slider-thumb]:appearance-none [&::-webkit-slider-thumb]:border-2 [&::-webkit-slider-thumb]:border-t-[#cdf5f4] [&::-webkit-slider-thumb]:border-l-[#cdf5f4] [&::-webkit-slider-thumb]:border-r-[#4c7f7e] [&::-webkit-slider-thumb]:border-b-[#4c7f7e] [&::-webkit-slider-thumb]:bg-[linear-gradient(to_right,#9cdbda_48%,#4c7f7e_48%,#4c7f7e_54%,#9cdbda_54%)]"
                  )}
                />
              </div>
            </div>
          </div>
        </div>

        <div className="flex h-[9px] shrink-0 items-center">
          <div className="h-0.5 flex-1 border-t border-b border-t-[#2b7a67] border-b-[#a2f2df]" />
          <div className={clsx("h-[9px] w-[9px]", RAISED_TEAL)} />
          <div className="h-0.5 w-2.5 border-t border-b border-t-[#2b7a67] border-b-[#a2f2df]" />
        </div>

        <div className={clsx("mx-1 flex min-h-0 flex-1 border-t-[3px]", SUNKEN_TEAL)}>
          <div className="flex flex-1 items-center justify-center border border-black">
            <div className="h-[122px] w-[145px] border-2 border-black bg-[#9cdbda] pt-4 pl-[51px]">
              <svg width="8" height="5" viewBox="0 0 8 5">
                <path d="M0 3 V1.500 H2 M5 4.500 H8 V2.500" fill="none" stroke="#222" />
                <rect x="2" y="0" width="3" height="3" fill="#b040c0" />
              </svg>
            </div>
          </div>
        </div>

        <div className="flex h-[44px] shrink-0 items-center gap-[3px] px-[5px]">
          <IconButton label="Delete" className="h-[38px] w-[30px]">
            <TagIcon text="DEL" dot="#e81818" />
          </IconButton>
          <IconButton label="Reference" className="h-[38px] w-[30px]">
            <TagIcon text="REF" dot="#18e838" />
          </IconButton>
          <p className="flex h-[41px] flex-1 items-center border border-black bg-[#9cdbda] pt-px pl-[3px]">1396 measurements for 2 layers</p>
          <IconButton label="Send down" className="h-[38px] w-[38px]">
            <MoveIcon />
          </IconButton>
          <IconButton label="Send up" className="h-[38px] w-[38px]">
            <MoveIcon up />
          </IconButton>
        </div>
        <div className="h-7 shrink-0 border-t border-black bg-[#9cdbda] p-px">
          <button className={clsx("h-[25px] w-full pt-[3px] leading-none", RAISED)}>Close</button>
        </div>
      </div>
    </Frame>
  );
}

/* ---------- taskbar ---------- */

const TASKS = [
  {
    name: "Shell",
    icon: (
      <svg width="34" height="32" viewBox="0 0 34 32">
        <path d="M9 28 L11 22 Q0 20 1 12 Q4 3 17 2 Q29 3 32 12 Q33 19 25 24 L24 28 Z" fill="#fbd27c" stroke="#d88a30" />
        <path d="M16 26 L3 12 M16 26 L8 6 M16 26 L14 2 M16 26 L21 3 M16 26 L28 7 M16 26 L32 13" stroke="#e09a48" fill="none" />
        <path d="M22 11 L24.500 17 L31 17.500 L26 21.500 L28 28 L22 24.500 L16 29 L18 22 L12 18 L19 17 Z" fill="#f07818" stroke="#b84c08" />
      </svg>
    ),
  },
  {
    name: "Notepad",
    icon: (
      <svg width="26" height="30" viewBox="0 0 26 30">
        <rect x="1" y="1" width="24" height="28" rx="2" fill="#e8f4fc" stroke="#fff" />
        <path d="M4 5.500 H22 M4 9 H22 M4 12.500 H22 M4 16 H22 M4 19.500 H22 M4 23 H22 M4 26 H22" stroke="#3c8cb8" strokeWidth="1.600" />
      </svg>
    ),
  },
  {
    name: "Genflex",
    icon: (
      <svg width="30" height="34" viewBox="0 0 30 34">
        <path d="M27 1 V8 L24 11 H11 L7 23 Q7 27 10 27 H17 L19 22 L14 21 L18 16 H27 L24 27 Q22 32 16 32 H6 Q0 31 1 24 L5 11 Q7 5 13 5 L22 4 Z" fill="#d82818" stroke="#8c1008" />
      </svg>
    ),
  },
  {
    name: "Disk",
    icon: (
      <svg width="32" height="32" viewBox="0 0 32 32">
        <path d="M1 1 H29 L31 4 V31 H1 Z" fill="#1838c0" stroke="#0a1c70" />
        <rect x="9" y="1" width="16" height="11" fill="#d0d8e4" />
        <rect x="18" y="2" width="4" height="8" fill="#1838a0" />
        <rect x="4" y="15" width="24" height="15" fill="#fff" />
        <path d="M6 18.500 H26 M6 22 H26 M6 26.500 H15" stroke="#c03030" />
        <text x="16" y="29" fontSize="7" fontFamily="Liberation Mono, monospace" fill="#333">64-</text>
      </svg>
    ),
  },
  {
    name: "Dingtalk",
    icon: (
      <svg width="28" height="28" viewBox="0 0 28 28">
        <rect width="28" height="28" rx="5" fill="#1890f8" />
        <path d="M8 4 Q18 9 21 13 Q22 15 18 22 Q15 24 14 22 L16 20 L12 20 L14 17 Q9 16 9 13 L12 13 Q7 9 8 4 Z" fill="#fff" />
      </svg>
    ),
  },
  {
    name: "Planner",
    icon: (
      <svg width="34" height="32" viewBox="0 0 34 32">
        <path d="M4 24 V4 Q4 2 7 2 H20" fill="none" stroke="#189048" strokeWidth="1.500" />
        <path d="M10 12 Q20 2 28 7 Q33 14 27 21 Q23 24 18 23 L17 30 H10 L12 18 L18 17 Q24 15 21 11 L15 13 L14 17 H9 Z" fill="#189048" />
      </svg>
    ),
  },
  {
    name: "Reel",
    icon: (
      <svg width="34" height="30" viewBox="0 0 34 30">
        <ellipse cx="20" cy="17" rx="12" ry="8.500" fill="#18988c" stroke="#0a5850" strokeWidth="2" />
        <ellipse cx="18" cy="15" rx="9" ry="6" fill="#50d0c0" />
        <ellipse cx="19" cy="15" rx="4.500" ry="3.500" fill="#1c6860" stroke="#f0e050" strokeWidth="1.500" />
        <path d="M10 21 Q18 28 28 21" fill="none" stroke="#f0e050" strokeWidth="1.200" />
        <path d="M2 3 Q9 0 13 7 Q7 8 2 3 Z" fill="#28b0a4" />
        <path d="M2 17 L8 24" stroke="#d8e0e8" strokeWidth="1.500" />
      </svg>
    ),
  },
];

function Taskbar() {
  return (
    <footer
      className={clsx(
        "flex h-[42px] shrink-0 items-center gap-1 border-t border-[#7d93ad] bg-linear-to-b from-[#1c3252] via-[#06224e] via-30% to-[#0b3468] pr-[3px] text-white",
        UI
      )}
    >
      <button aria-label="Start" className="flex w-14 shrink-0 justify-center pr-1">
        <svg width="38" height="38" viewBox="0 0 38 38">
          <defs>
            <radialGradient id="orb" cx=".5" cy=".85" r=".8">
              <stop offset="0" stopColor="#3cc8f4" />
              <stop offset=".5" stopColor="#1c5a9c" />
              <stop offset="1" stopColor="#8fb0cc" />
            </radialGradient>
          </defs>
          <circle cx="19" cy="19" r="17.500" fill="url(#orb)" stroke="#8cc4e0" />
          <path d="M10 11 Q14 8 18 11 L17 18 Q13 15 9 17.500 Z" fill="#f06428" />
          <path d="M20 11.500 Q24 14 29 11 L27 19 Q23 21 18.500 18.500 Z" fill="#8cc43c" />
          <path d="M8.500 19.500 Q12 17 16.500 20 L15 27 Q11 24 7 26.500 Z" fill="#3c9ce8" />
          <path d="M18.500 20.500 Q23 23 27 21 L25 28 Q21 30 17 27.500 Z" fill="#fcc828" />
        </svg>
      </button>
      {TASKS.map((task) => (
        <button
          key={task.name}
          aria-label={task.name}
          className="flex h-[39px] w-[58px] shrink-0 items-center justify-center rounded-sm border border-[#7d8ea6] bg-linear-to-br from-[#5d7390] via-[#2a4268] via-40% to-[#1c3864]"
        >
          {task.icon}
        </button>
      ))}
      <button
        aria-label="X server"
        className="flex h-[39px] w-[55px] shrink-0 items-center justify-center rounded-sm border border-r-4 border-double border-[#e0e6ee] bg-linear-to-br from-[#c4ccd8] to-[#76869c]"
      >
        <svg width="32" height="32" viewBox="0 0 32 32">
          <path d="M1 1 H8 L31 30 H23 Z" fill="#800080" stroke="#fff" strokeWidth="1.500" />
          <path d="M30 2 L17 15 M13 19 L2 30" stroke="#fff" strokeWidth="3.500" />
          <path d="M30 2 L17 15 M13 19 L2 30" stroke="#402050" strokeWidth="1.500" />
        </svg>
      </button>

      <div className="ml-auto flex h-full items-center gap-2.5">
        <svg width="16" height="18" viewBox="0 0 16 18">
          <path d="M3 5 Q5 1 8 3 T13 1" fill="none" stroke="#ccc" />
          <rect x="1" y="8" width="14" height="9" rx="1" fill="#ddd" stroke="#777" />
          <path d="M3 10.500 H13 M3 12.500 H13 M5 14.500 H11" stroke="#555" strokeDasharray="1.500 .7" />
        </svg>
        <svg width="16" height="16" viewBox="0 0 16 16">
          <circle cx="8" cy="8" r="7.200" fill="#1020c0" stroke="#dfe4f8" />
          <text x="8" y="12" textAnchor="middle" fontSize="11" fontWeight="bold" fill="#fff" fontFamily="Liberation Sans, sans-serif">?</text>
        </svg>
        <svg width="10" height="24" viewBox="0 0 10 24">
          <path d="M3.500 4.500 V2.500 H9 V6.500 H7 M1 5 H7 V9 H1 Z" fill="none" stroke="#fff" strokeWidth="1.200" />
          <path d="M2 17 H8 L5 20 Z" fill="#fff" />
        </svg>
        <svg width="8" height="6" viewBox="0 0 8 6"><path d="M0 5 L4 1 L8 5 Z" fill="#fff" /></svg>
        <svg width="16" height="16" viewBox="0 0 16 16">
          <path d="M1.500 1 V15" stroke="#fff" strokeWidth="1.500" />
          <path d="M3 2 H8 V4 H13 V9 H3 Z" fill="#fff" />
          <circle cx="11" cy="11" r="4.500" fill="#d82818" />
          <path d="M9 9 L13 13 M13 9 L9 13" stroke="#fff" strokeWidth="1.400" />
        </svg>
        <svg width="16" height="14" viewBox="0 0 16 14">
          <path d="M1 4.500 H3.500 L7 1 V13 L3.500 9.500 H1 Z" fill="#fff" />
          <path d="M9.500 4.500 Q11 7 9.500 9.500 M11.500 3 Q14 7 11.500 11" fill="none" stroke="#fff" strokeWidth="1.100" />
        </svg>
        <svg width="16" height="16" viewBox="0 0 16 16">
          <rect x="5" y="4" width="10" height="8" fill="none" stroke="#fff" strokeWidth="1.500" />
          <path d="M1 1 V5 H4 V1 M2.500 5 V11 H5 M7 14.500 H13" stroke="#fff" fill="none" strokeWidth="1.200" />
        </svg>
        <p className="w-14 text-center text-[12px] leading-[18px]">
          21:29
          <br />
          2023/6/23
        </p>
        <button aria-label="Show desktop" className="h-[39px] w-3 border border-[#6f86a4] bg-linear-to-b from-[#7386a0] to-[#10305c]" />
      </div>
    </footer>
  );
}

export default function App() {
  return (
    <div className={clsx("relative flex h-screen flex-col overflow-hidden bg-black text-black", MONO)}>
      <MainTitle />
      <div className="flex min-h-0 flex-1 flex-col border-l-[7px] border-[#6f8fae]">
        <HeaderBar />
        <div className="flex min-h-0 flex-1">
          <Sidebar />
          <main className="min-w-0 flex-1 overflow-hidden bg-black">
            <Board />
          </main>
          <aside className="flex w-[157px] shrink-0 flex-col justify-end border-l-2 border-[#1f5a4c] bg-black pb-0.5">
            <p className="h-[46px] border-y-2 border-[#a2f2df] bg-[#52cfaf] pt-2 pl-[3px] text-[15px] leading-[15px] font-bold whitespace-pre">
              {'X = 3.450546"\nY = 6.334797"'}
            </p>
          </aside>
        </div>
        <div className="flex h-[34px] shrink-0 border-b-2 border-black bg-[#52cfaf] text-[15px] font-bold">
          <p className={clsx("flex flex-1 items-center border-r-2 border-black bg-[#ffffcc] pl-[503px] text-[13px]", SERIF)}>Inner</p>
          <OptionMenu label="Units" text="Inch" className="mt-0.5 ml-1.5 h-7 w-[66px]" barClass={RAISED_TEAL} />
        </div>
        <p className="flex h-[29px] shrink-0 items-center justify-center border-t-2 border-b-4 border-double border-t-[#5b8180] border-b-[#4c7f7e] bg-[#b4ffff] pt-px pl-2 text-[12px] font-bold">
          DX=-0.0020668,DY=0.0020668,D=0.0029229
        </p>
      </div>
      <Taskbar />

      <ChecklistEditor />
      <MeasurePopup />
      <ResultsHistogram />
      <ResultsViewer />
    </div>
  );
}
